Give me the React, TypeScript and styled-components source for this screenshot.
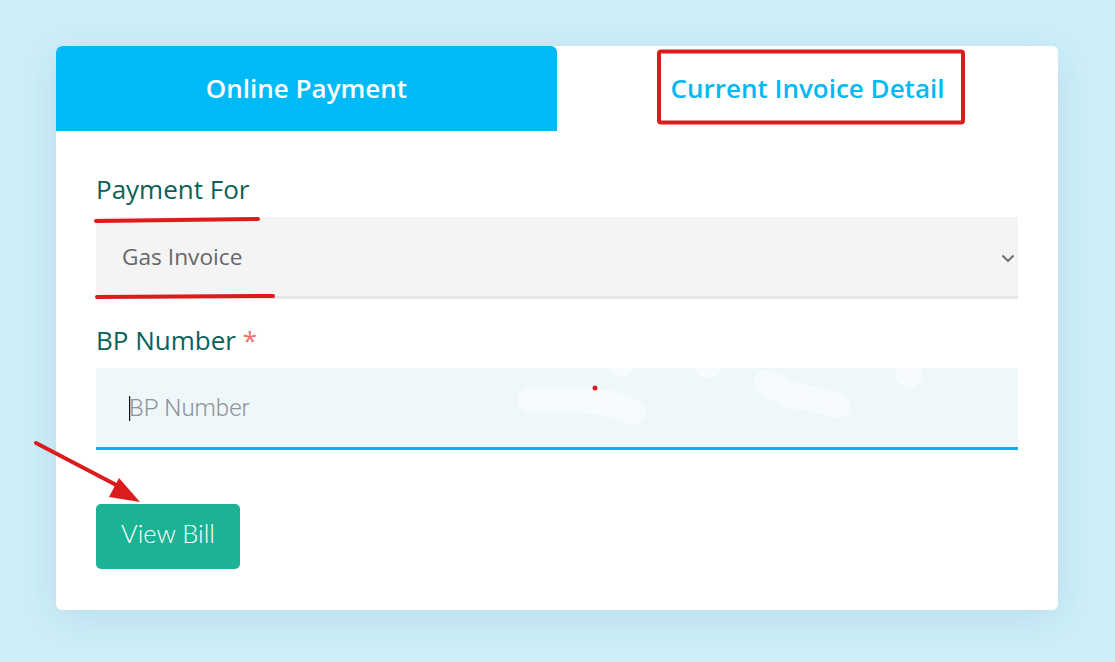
import React from "react";
import styled, { createGlobalStyle } from "styled-components";

const GlobalStyle = createGlobalStyle`
  html, body {
    margin: 0;
    padding: 0;
    background: #cdeffa;
    font-family: "Open Sans", "Liberation Sans", sans-serif;
  }
`;

const Page = styled.div`
  position: relative;
  width: 1115px;
  height: 662px;
  padding: 46px 57px 0 56px;
  box-sizing: border-box;
  overflow: hidden;
`;

const Card = styled.div`
  background: #fff;
  border-radius: 6px;
  box-shadow: 0 8px 40px rgba(40, 90, 110, 0.12);
  overflow: hidden;
`;

const Tabs = styled.div`
  display: grid;
  grid-template-columns: 501px 1fr;
  height: 85px;
`;

const Tab = styled.div<{ $active?: boolean }>`
  display: flex;
  align-items: center;
  justify-content: center;
  padding-bottom: 2px;
  box-sizing: border-box;
  font-size: 26px;
  font-weight: 600;
  color: ${(p) => (p.$active ? "#fff" : "#00b9f2")};
  background: ${(p) => (p.$active ? "#00baf7" : "#fff")};
  border-radius: ${(p) => (p.$active ? "6px 6px 0 0" : "0")};
`;

const Body = styled.div`
  padding: 42px 40px 41px 40px;
  display: flex;
  flex-direction: column;
`;

const Label = styled.label`
  font-size: 26px;
  line-height: 33px;
  color: #0b6158;
  margin-bottom: 11px;

  span {
    color: #f46b6b;
  }
`;

const SelectBox = styled.div`
  position: relative;
  height: 79px;
  background: #f4f4f4;
  border-bottom: 3px solid #e6e6e6;
  display: flex;
  align-items: center;
  padding: 0 26px;
  font-size: 22.7px;
  color: #666;
  margin-bottom: 25px;
`;

const Chevron = styled.svg`
  position: absolute;
  right: 3px;
  top: 37px;
`;

const InputField = styled.input`
  height: 79px;
  background: #eef7fa;
  border: none;
  border-bottom: 3px solid #00b4ef;
  padding: 0 33px;
  font-family: Roboto, "Liberation Sans", sans-serif;
  font-weight: 300;
  font-size: 24px;
  outline: none;
  margin-bottom: 54px;

  &::placeholder {
    color: #8f9396;
  }
`;

const Button = styled.button`
  align-self: flex-start;
  width: 144px;
  height: 65px;
  padding: 0 0 7px;
  border: none;
  border-radius: 5px;
  background: #1bb394;
  color: #fff;
  font-family: Lato, "Liberation Sans", sans-serif;
  font-weight: 300;
  font-size: 25.4px;
`;

const Overlay = styled.svg`
  position: absolute;
  left: 0;
  top: 0;
  pointer-events: none;
`;

const App = () => (
  <Page>
    <GlobalStyle />
    <Card>
      <Tabs>
        <Tab $active>Online Payment</Tab>
        <Tab>Current Invoice Detail</Tab>
      </Tabs>
      <Body>
        <Label>Payment For</Label>
        <SelectBox>
          Gas Invoice
          <Chevron width="14" height="9" viewBox="0 0 14 9">
            <path d="M1.5 1.5 7 7l5.5-5.5" fill="none" stroke="#666" strokeWidth="1.8" />
          </Chevron>
        </SelectBox>
        <Label>
          BP Number <span>*</span>
        </Label>
        <InputField placeholder="BP Number" />
        <Button>View Bill</Button>
      </Body>
    </Card>
    <Overlay width="1115" height="662" viewBox="0 0 1115 662">
      <defs>
        <clipPath id="inputClip">
          <rect x="96" y="368" width="922" height="79" />
        </clipPath>
      </defs>
      <g clipPath="url(#inputClip)" fill="none" stroke="#f6fbfd" strokeLinecap="round" strokeLinejoin="round" strokeWidth="26">
        <path d="M530 400 H585 L613 404 L633 412" />
        <path d="M767 383 L790 395 L818 400 L838 405" />
        <path d="M614 357 L622 364" />
        <path d="M700 357 L708 366" />
        <path d="M908 374 L909 375" />
      </g>
      <rect x="129" y="396" width="1.2" height="25" fill="#111" />
      <circle cx="595" cy="388" r="2.5" fill="#e01b1b" />
      <rect x="659" y="51.5" width="304" height="71" rx="2" fill="none" stroke="#dc1c1c" strokeWidth="4" />
      <g stroke="#dc1c1c" strokeWidth="4" strokeLinecap="round" fill="none">
        <path d="M96 221 L258 219" />
        <path d="M97 297 L273 296" />
        <path d="M36 443 L122 488" />
      </g>
      <path d="M119 478 L140 502 L109 497 Z" fill="#dc1c1c" />
    </Overlay>
  </Page>
);

export default App;
